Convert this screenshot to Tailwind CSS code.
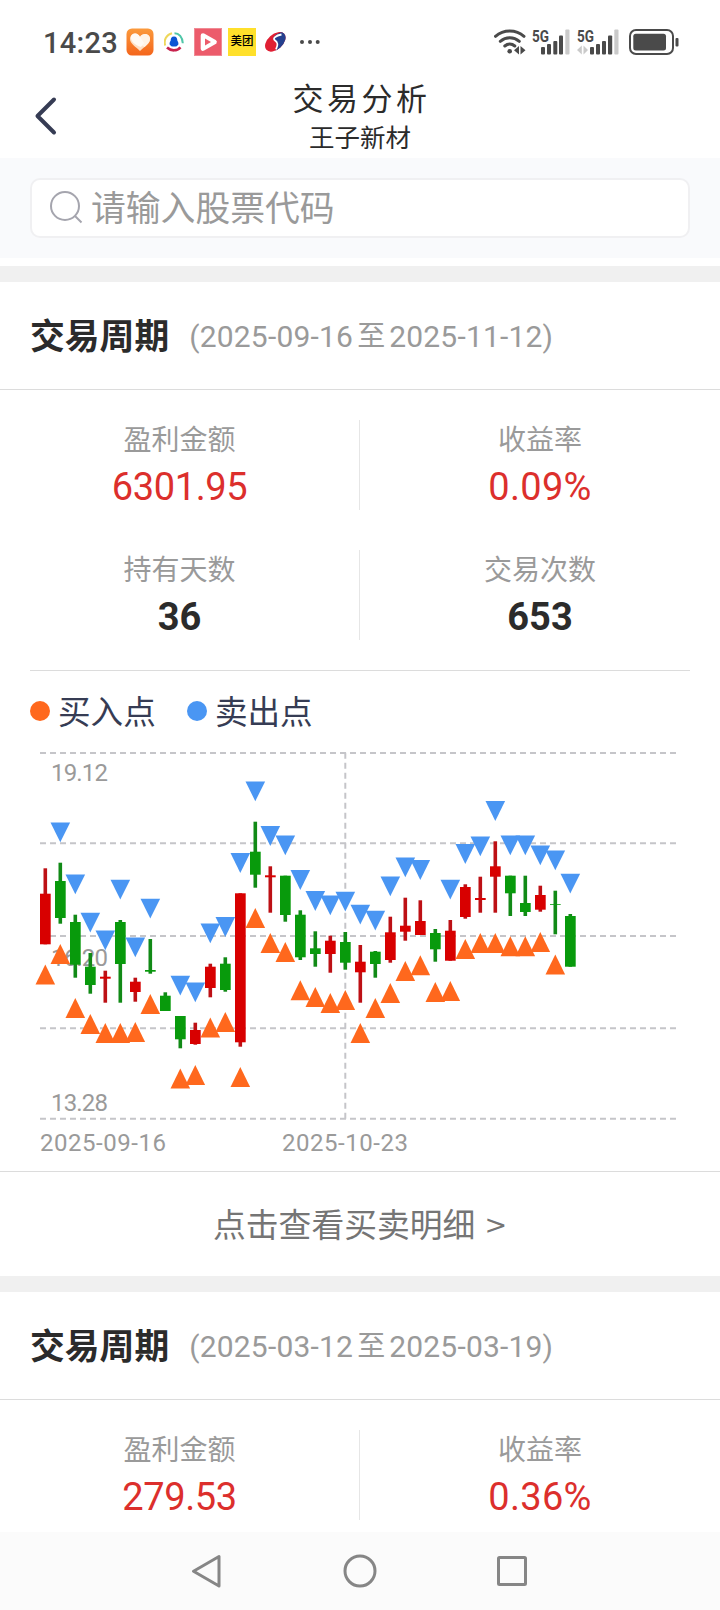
<!DOCTYPE html>
<html lang="zh-CN">

<head>
  <meta charset="UTF-8" />
  <meta name="viewport" content="width=device-width, initial-scale=1.0" />
  <title>交易分析</title>
  <script src="https://cdn.jsdelivr.net/npm/@tailwindcss/browser@4"></script>
</head>

<body class="flex flex-col w-[720px] h-[1610px] overflow-hidden bg-white text-[#2b2b2b] font-[Roboto,'Noto_Sans_CJK_SC',sans-serif]">
  <!-- Status bar -->
  <div class="flex items-center h-[84px] pl-[43px] pr-[41px] shrink-0 text-[#4a4a4a]">
    <span class="w-[83px] pt-[2px] text-[29px] leading-[29px] font-medium tracking-[0.300px]">14:23</span>
    <!-- Heart -->
    <svg class="w-7 h-7" viewBox="0 0 28 28">
      <defs>
        <linearGradient id="orange" x1="0" y1="0" x2="0" y2="1">
          <stop offset="0" stop-color="#fb9a3c" />
          <stop offset="1" stop-color="#f4651c" />
        </linearGradient>
      </defs>
      <rect x=".5" y=".5" width="27" height="27" rx="5.500" fill="url(#orange)" />
      <path d="M14 23C10 19 4 15.500 4 11c0-5 7-7 10-2 3-5 10-3 10 2 0 4.500-6 8-10 12z" fill="#fde0c6" />
      <path d="M14 9c3-5 10-3 10 2 0 3-2.500 5.500-5.500 8L11 14z" fill="#fff3e6" />
      <path d="M5 8c2-4 7-3.500 9 1l4 6-3 4C9 17 4 13 5 8z" fill="#fffaf4" />
    </svg>
    <!-- Ring with penguin -->
    <svg class="w-5 h-5 ml-[10px]" viewBox="0 0 20 20" fill="none" stroke-width="2">
      <path d="M1.200 13.500C-.5 8 2.500 2.500 8 1.200" stroke="#eed75a" />
      <path d="M10.500 1.200c4.500 0 8 4 8.300 10" stroke="#4fc6a8" />
      <path d="M3 15.500c4 3.800 10 3.800 13.500-.2" stroke="#c8234e" stroke-width="2.600" />
      <path d="M10 4.500c2.600 0 3.300 2 3.300 4 1 1.500 1.500 3 .8 4.500H5.900c-.7-1.500-.2-3 .8-4.500 0-2 .7-4 3.300-4z" fill="#0b55d4" />
      <ellipse cx="10" cy="13" rx="3.600" ry="1.500" fill="#0b55d4" />
    </svg>
    <!-- Play -->
    <svg class="w-7 h-7 ml-[10px]" viewBox="0 0 28 28">
      <rect width="28" height="28" fill="#f08a94" />
      <rect x="1" y="1" width="26" height="26" fill="#ec5b6b" />
      <path d="M9 7.500l11.500 6.500L9 20.500z" fill="#fff" stroke="#fff" stroke-width="4.600" stroke-linejoin="round" />
      <path d="M11 10.500l6 3.500-6 3.500z" fill="#ec5b6b" />
    </svg>
    <span class="flex items-center justify-center w-7 h-7 ml-1.5 bg-[#ffe02b] text-black text-[11.500px] leading-none font-medium">美团</span>
    <!-- Swirl -->
    <svg class="w-[21px] h-5 ml-[9px]" viewBox="0 0 21 20">
      <defs>
        <clipPath id="disc">
          <ellipse cx="10.300" cy="9.800" rx="12" ry="7.600" transform="rotate(-42 10.300 9.800)" />
        </clipPath>
      </defs>
      <g clip-path="url(#disc)">
        <rect width="21" height="20" fill="#e01f33" />
        <path d="M21 0H16.500C9 3 6.500 6.500 9.500 8.500c3 2 4 4.500.5 11.500h11z" fill="#24408e" />
        <path d="M16.500 2.500C10.500 3.500 7.500 6.700 9.800 8.300c3 2 3.700 4 1.200 9" fill="none" stroke="#fff" stroke-width="1.800" />
      </g>
    </svg>
    <svg class="w-6 h-6 ml-3" viewBox="0 0 24 24" fill="#4a4a4a">
      <circle cx="4" cy="12" r="2" />
      <circle cx="12" cy="12" r="2" />
      <circle cx="19.700" cy="12" r="2" />
    </svg>

    <div class="flex items-center ml-auto">
      <!-- Wifi -->
      <svg class="w-8 h-[26px]" viewBox="0 0 32 26" fill="none" stroke="#4a4a4a" stroke-width="3" stroke-linecap="round">
        <path d="M1.500 7.300c8-7 20.500-7 28.500 0" />
        <path d="M6.300 12.300c5.500-4.700 13.500-4.700 19 0" />
        <path d="M10.800 17c3-2.600 7-2.600 10 0" />
        <circle cx="15.700" cy="22.300" r="2.300" fill="#4a4a4a" stroke="none" />
        <path d="M25 17v8.500L20 21.200zM26.500 17v8.500l5-4.300z" fill="#4a4a4a" stroke="none" />
      </svg>
      <!-- Signal 1 -->
      <svg class="w-[38px] h-[26px] ml-[6px] overflow-visible" viewBox="0 0 38 26" fill="#4a4a4a">
        <text x="0" y="12.500" font-size="16.500" font-weight="700" textLength="17" lengthAdjust="spacingAndGlyphs">5G</text>
        <rect x="9" y="18" width="4" height="7.500" rx="1" />
        <rect x="15" y="15" width="4" height="10.500" rx="1" />
        <rect x="21.300" y="12" width="4" height="13.500" rx="1" />
        <rect x="27" y="6.500" width="4" height="19" rx="1" />
        <rect x="33.300" y=".5" width="4.200" height="25" rx="1" fill="#cacaca" />
      </svg>
      <!-- Signal 2 -->
      <svg class="w-[42px] h-[26px] ml-[7px] overflow-visible" viewBox="0 0 42 26" fill="#4a4a4a">
        <text x="0" y="12.500" font-size="16.500" font-weight="700" textLength="17" lengthAdjust="spacingAndGlyphs">5G</text>
        <path d="M4.800 16.500v9L0 21zM6.500 16.500v9L11 21z" fill="#cacaca" />
        <rect x="13" y="18" width="4" height="7.500" rx="1" />
        <rect x="19" y="15" width="4" height="10.500" rx="1" />
        <rect x="25" y="12" width="4" height="13.500" rx="1" />
        <rect x="31" y="6.500" width="4.200" height="19" rx="1" />
        <rect x="37.300" y=".5" width="4.200" height="25" rx="1" fill="#cacaca" />
      </svg>
      <!-- Battery -->
      <svg class="w-[50px] h-[26px] ml-[10px]" viewBox="0 0 50 26">
        <rect x="1" y="1" width="43" height="24" rx="6" fill="none" stroke="#4a4a4a" stroke-width="2" />
        <rect x="4.300" y="4.800" width="32.700" height="16.700" rx="2.500" fill="#4a4a4a" />
        <rect x="46.500" y="9" width="3" height="8.500" rx="1" fill="#4a4a4a" />
      </svg>
    </div>
  </div>

  <!-- Header -->
  <div class="grid grid-cols-[120px_1fr_120px] h-[74px] shrink-0">
    <svg class="w-6 h-10 ml-[34px] mt-3" viewBox="0 0 24 40" fill="none" stroke="#363c54" stroke-width="4" stroke-linecap="round" stroke-linejoin="round">
      <path d="M20 3.500L3.500 20 20 36.500" />
    </svg>
    <div class="flex flex-col items-center">
      <h1 class="h-[34px] mt-[-1px] ml-[3px] text-[31px] leading-[34px] tracking-[3.500px]">交易分析</h1>
      <div class="h-[30px] mt-[6px] text-[25.500px] leading-[30px]">王子新材</div>
    </div>
  </div>

  <!-- Search -->
  <div class="h-[100px] px-[30px] pt-5 bg-[#f9fafc] shrink-0">
    <div class="flex items-center h-[60px] pl-[18px] bg-white border-2 border-[#f0f0f2] rounded-[10px]">
      <svg class="w-[34px] h-[34px]" viewBox="0 0 34 34" fill="none" stroke="#a5a5ae" stroke-width="2">
        <circle cx="15" cy="15" r="14" />
        <path d="M25 25l6.500 6.500" />
      </svg>
      <span class="ml-[7px] pt-[2px] text-[34.800px] leading-[54px] text-[#9a9a9a]">请输入股票代码</span>
    </div>
  </div>
  <div class="h-6 border-t-8 border-white bg-[#f0f0f0] shrink-0"></div>

  <!-- Period 1 -->
  <div class="flex items-center h-[108px] pt-[2px] pl-[30px] border-b border-[#dcdcdc] shrink-0">
    <h2 class="text-[34.800px] leading-[50px] font-bold">交易周期</h2>
    <span class="flex items-center ml-[20px] text-[30px] text-[#9a9a9a] tracking-[0.200px]">(2025-09-16<span class="mx-[4px] text-[28px] tracking-normal">至</span>2025-11-12)</span>
  </div>
  <div class="flex flex-col gap-10 h-[280px] pt-[30px] shrink-0">
    <div class="grid grid-cols-2 grid-rows-[90px] text-center">
      <div class="border-r border-[#e6e6e6]">
        <div class="h-[41px] pt-px text-[28px] leading-10 text-[#9a9a9a]">盈利金额</div>
        <div class="text-[38px] leading-[52px] tracking-[-0.400px] text-[#dc2f2c]">6301.95</div>
      </div>
      <div>
        <div class="h-[41px] pt-px text-[28px] leading-10 text-[#9a9a9a]">收益率</div>
        <div class="text-[38px] leading-[52px] tracking-[0.300px] text-[#dc2f2c]">0.09%</div>
      </div>
    </div>
    <div class="grid grid-cols-2 grid-rows-[90px] text-center">
      <div class="border-r border-[#e6e6e6]">
        <div class="h-[41px] pt-px text-[28px] leading-10 text-[#9a9a9a]">持有天数</div>
        <div class="text-[38px] leading-[52px] font-bold">36</div>
      </div>
      <div>
        <div class="h-[41px] pt-px text-[28px] leading-10 text-[#9a9a9a]">交易次数</div>
        <div class="text-[38px] leading-[52px] font-bold">653</div>
      </div>
    </div>
  </div>
  <div class="h-px mx-[30px] bg-[#dcdcdc] shrink-0"></div>

  <!-- Legend -->
  <div class="flex items-center h-[80px] pl-[30px] text-[32.640px] leading-10 text-[#363c54] shrink-0">
    <span class="w-5 h-5 rounded-full bg-[#ff681d]"></span>
    <span class="ml-[8px] pt-[3px]">买入点</span>
    <span class="w-5 h-5 ml-[31px] rounded-full bg-[#4a96f3]"></span>
    <span class="ml-[8px] pt-[3px]">卖出点</span>
  </div>

  <!-- Chart -->
  <svg id="chart" class="w-[720px] h-[420px] shrink-0" viewBox="0 21 720 420">
    <g stroke="#c5c5c9" stroke-width="2" stroke-dasharray="6 4">
      <path d="M40 23H676M40 113.300H676M40 206H676M40 298.300H676M40 388.700H676" />
      <path d="M345.300 388.700V21" />
    </g>
    <g fill="#9a9a9a" font-size="24">
      <text x="51" y="51" textLength="57">19.12</text>
      <text x="51" y="236" textLength="57">16.20</text>
      <text x="51" y="380.600" textLength="57">13.28</text>
      <text x="40" y="420.700" textLength="126">2025-09-16</text>
      <text x="282" y="420.700" textLength="126">2025-10-23</text>
    </g>
    <g id="candles"></g>
  </svg>
  <a class="flex items-center justify-center h-[105px] pt-[5px] border-t border-[#dcdcdc] text-[32.800px] text-[#757575] shrink-0">点击查看买卖明细<span class="ml-[9px] pb-[3px] font-['DejaVu_Sans'] text-[27px]">&gt;</span></a>

  <!-- Period 2 -->
  <div class="h-4 bg-[#f0f0f0] shrink-0"></div>
  <div class="flex items-center h-[108px] pt-[2px] pl-[30px] border-b border-[#dcdcdc] shrink-0">
    <h2 class="text-[34.800px] leading-[50px] font-bold">交易周期</h2>
    <span class="flex items-center ml-[20px] text-[30px] text-[#9a9a9a] tracking-[0.200px]">(2025-03-12<span class="mx-[4px] text-[28px] tracking-normal">至</span>2025-03-19)</span>
  </div>
  <div class="h-[132px] pt-[30px] shrink-0">
    <div class="grid grid-cols-2 grid-rows-[90px] text-center">
      <div class="border-r border-[#e6e6e6]">
        <div class="h-[41px] pt-px text-[28px] leading-10 text-[#9a9a9a]">盈利金额</div>
        <div class="text-[38px] leading-[52px] tracking-[-0.400px] text-[#dc2f2c]">279.53</div>
      </div>
      <div>
        <div class="h-[41px] pt-px text-[28px] leading-10 text-[#9a9a9a]">收益率</div>
        <div class="text-[38px] leading-[52px] tracking-[0.300px] text-[#dc2f2c]">0.36%</div>
      </div>
    </div>
  </div>

  <!-- Navigation bar -->
  <div class="flex items-center justify-center gap-[118px] h-[78px] bg-[#fbfbfb] shrink-0">
    <svg class="w-[34px] h-[34px]" viewBox="0 0 34 34" fill="none" stroke="#868686" stroke-width="3" stroke-linejoin="round">
      <path d="M28 2.500v29.500L2.500 17.200z" />
    </svg>
    <svg class="w-[34px] h-[34px]" viewBox="0 0 34 34" fill="none" stroke="#868686" stroke-width="3">
      <circle cx="17" cy="17" r="15" />
    </svg>
    <svg class="w-[34px] h-[34px]" viewBox="0 0 34 34" fill="none" stroke="#868686" stroke-width="3">
      <rect x="3.500" y="3.500" width="27" height="27" rx="1" />
    </svg>
  </div>

  <script>
    // [high, body top, body bottom, low, up?, marks: s = sell, b = buy]
    const days = [
      [138.3, 163.7, 214.3, 214.3, 1, 'b'],
      [132.7, 151, 188, 193.7, 0, 'sb'],
      [184.7, 192, 234.7, 247.7, 0, 'sb'],
      [223, 236.7, 255, 263.7, 0, 'sb'],
      [240.7, 246.7, 248.7, 272.7, 1, 'sb'],
      [190, 192, 234, 272.7, 0, 'sb'],
      [247.7, 251.7, 262, 271.7, 1, 'sb'],
      [209, 240, 241.7, 243.7, 0, 'sb'],
      [262.3, 265.7, 281, 281, 0, ''],
      [286, 286, 309.3, 318.3, 0, 'sb'],
      [292.7, 300, 314, 314.7, 1, 'sb'],
      [233.7, 236.7, 258, 267.3, 1, 'sb'],
      [227.3, 233.7, 260, 261.7, 0, 'sb'],
      [163.3, 163.3, 312.3, 316.7, 1, 'sb'],
      [91.7, 121.7, 144.7, 157.7, 0, 'sb'],
      [136.3, 145.3, 147.3, 182.7, 1, 'sb'],
      [145.7, 145.7, 185, 191.7, 0, 'sb'],
      [180.3, 184.7, 227.3, 230, 0, 'sb'],
      [201.3, 218.3, 224, 236.7, 0, 'sb'],
      [205.7, 210.7, 224, 242.7, 1, 'sb'],
      [202, 212, 232.7, 239.7, 0, 'sb'],
      [215, 231.7, 242.3, 272.7, 1, 'sb'],
      [221, 221.7, 234, 247.7, 0, 'sb'],
      [186.7, 202.3, 230, 232.7, 1, 'sb'],
      [167.7, 195.7, 201.7, 210.7, 1, 'sb'],
      [170.3, 191, 205, 205, 1, 'sb'],
      [199, 203, 219.3, 231.7, 0, 'b'],
      [190, 200.7, 230.7, 230.7, 1, 'sb'],
      [154.3, 157, 187, 188.7, 1, 'sb'],
      [146.7, 168, 170, 182.7, 1, 'sb'],
      [111.3, 136.3, 146.7, 182.7, 1, 'sb'],
      [145.7, 145.7, 163.3, 186, 0, 'sb'],
      [145.7, 173, 182, 186, 0, 'sb'],
      [155.7, 165, 179.7, 181.7, 1, 'sb'],
      [160.7, 174, 174.8, 204.3, 0, 'sb'],
      [184, 186, 236.7, 236.7, 0, 's']
    ];

    let html = '';
    days.forEach(([high, top, bottom, low, up], i) => {
      const x = 45.3 + i * 15;
      html += `<rect x="${x - 1.8}" y="${high}" width="3.600" height="${low - high}" fill="${up ? '#bd1015' : '#118a16'}" />`;
      html += `<rect x="${x - 5.3}" y="${top}" width="10.700" height="${bottom - top}" fill="${up ? '#d80000' : '#089a0c'}" />`;
    });
    // markers sit at a fixed distance from the wick ends
    days.forEach(([high, , , low, , marks], i) => {
      const x = 45.3 + i * 15;
      if (marks.includes('s')) html += `<path d="M${x - 9.8} ${high - 40.2}h19.600l-9.800 19.800z" fill="#4a96f3" />`;
      if (marks.includes('b')) html += `<path d="M${x - 9.8} ${low + 40.2}h19.600l-9.800 -20z" fill="#ff681d" />`;
    });
    document.getElementById('candles').innerHTML = html;
  </script>
</body>

</html>
